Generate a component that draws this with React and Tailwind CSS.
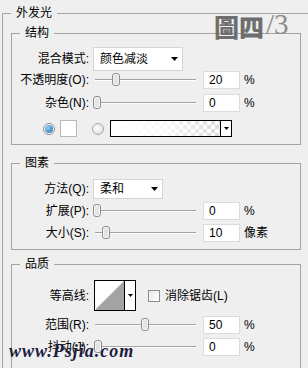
import React from "react";

const font = { fontFamily: '"Liberation Sans", "Noto Sans CJK SC", sans-serif' };

function Thumb() {
    return (
        <svg width="8" height="13" viewBox="0 0 8 13">
            <rect x="0.5" y="0.5" width="7" height="12" rx="2.5" fill="#f7f7f7" stroke="#8c8c8c" />
            <rect x="2" y="2" width="4" height="9" rx="1" fill="#e4e4e4" />
        </svg>
    );
}

function Slider({ pos }) {
    return (
        <div className="relative w-[101px] h-[14px] shrink-0 ml-[6px]">
            <div className="absolute left-0 right-0 top-[6px] h-px bg-[#a3a3a3]" />
            <div className="absolute left-0 right-0 top-[7px] h-px bg-white" />
            <div className="absolute top-0" style={{ left: pos }}>
                <Thumb />
            </div>
        </div>
    );
}

function Field({ value, unit = "%" }) {
    return (
        <>
            <div className="ml-[7px] w-[37px] h-[18px] bg-white border border-[#dcdcdc] pl-[5px] text-[12px] leading-[16px] text-black">
                {value}
            </div>
            <span className="ml-[4px] text-[12px] text-black">{unit}</span>
        </>
    );
}

function Label({ children }) {
    return <div className="w-[77px] shrink-0 text-right text-[12px] leading-[16px] text-black whitespace-nowrap">{children}</div>;
}

function Arrow() {
    return (
        <svg width="7" height="4" viewBox="0 0 7 4">
            <path d="M0 0h7L3.5 4z" fill="#000" />
        </svg>
    );
}

function Group({ title, className, children }) {
    return (
        <fieldset className={`border border-[#a4a4a4] ${className}`}>
            <legend className="ml-[8px] px-[5px] text-[12px] leading-[16px] text-black">{title}</legend>
            {children}
        </fieldset>
    );
}

export default function App() {
    return (
        <div className="relative w-[308px] h-[368px] overflow-hidden bg-[#efefef]" style={font}>
            <fieldset className="ml-[2px] mt-[5px] w-[306px] border border-r-0 border-b-0 border-[#a4a4a4] pb-[40px]">
                <legend className="ml-[8px] px-[5px] text-[12px] leading-[16px] text-black">外发光</legend>

                {/* 结构 */}
                <Group title="结构" className="ml-[8px] mt-[4px] w-[290px] pb-[7px]">
                    <div className="flex items-center mt-[6px] h-[24px]">
                        <Label>混合模式:</Label>
                        <div className="ml-[4px] w-[90px] h-[24px] bg-white border border-[#d4d4d4] flex items-center justify-between pl-[6px] pr-[4px] text-[12px]">
                            <span>颜色减淡</span>
                            <Arrow />
                        </div>
                    </div>
                    <div className="flex items-center h-[18px]">
                        <Label>不透明度(O):</Label>
                        <Slider pos={17} />
                        <Field value="20" />
                    </div>
                    <div className="flex items-center mt-[5px] h-[18px]">
                        <Label>杂色(N):</Label>
                        <Slider pos={-2} />
                        <Field value="0" />
                    </div>
                    <div className="flex items-center mt-[8px] h-[17px]">
                        <div className="ml-[31px] w-[12px] h-[12px] rounded-full border border-[#8a8a8a] bg-white flex items-center justify-center">
                            <div className="w-[8px] h-[8px] rounded-full bg-[radial-gradient(circle_at_35%_35%,#8fd0f5,#1d6aa8)]" />
                        </div>
                        <div className="ml-[5px] w-[17px] h-[17px] bg-white border border-[#b8b8b8]" />
                        <div className="ml-[15px] w-[12px] h-[12px] rounded-full border border-[#a8a8a8] bg-[radial-gradient(circle_at_40%_40%,#ffffff,#d8d8d8)]" />
                        <div className="ml-[6px] w-[122px] h-[17px] border border-black flex">
                            <div className="flex-1 bg-[repeating-conic-gradient(#d6d6d6_0%_25%,#ffffff_0%_50%)] bg-[length:8px_8px]">
                                <div className="w-full h-full bg-gradient-to-r from-white via-white/80 to-white/10" />
                            </div>
                            <div className="w-[11px] border-l border-black bg-white flex items-center justify-center">
                                <svg width="5" height="3" viewBox="0 0 5 3"><path d="M0 0h5L2.5 3z" fill="#000" /></svg>
                            </div>
                        </div>
                    </div>
                </Group>

                {/* 图素 */}
                <Group title="图素" className="ml-[8px] mt-[10px] w-[290px] pb-[7px]">
                    <div className="flex items-center mt-[8px] h-[20px]">
                        <Label>方法(Q):</Label>
                        <div className="ml-[4px] w-[70px] h-[20px] bg-white border border-[#d4d4d4] flex items-center justify-between pl-[6px] pr-[4px] text-[12px]">
                            <span>柔和</span>
                            <Arrow />
                        </div>
                    </div>
                    <div className="flex items-center mt-[3px] h-[18px]">
                        <Label>扩展(P):</Label>
                        <Slider pos={-2} />
                        <Field value="0" />
                    </div>
                    <div className="flex items-center mt-[4px] h-[18px]">
                        <Label>大小(S):</Label>
                        <Slider pos={7} />
                        <Field value="10" unit="像素" />
                    </div>
                </Group>

                {/* 品质 */}
                <Group title="品质" className="ml-[8px] mt-[6px] w-[290px] pb-[20px]">
                    <div className="flex items-center mt-[8px] h-[31px]">
                        <Label>等高线:</Label>
                        <div className="ml-[5px] w-[42px] h-[31px] border border-black bg-white flex">
                            <svg className="flex-1" height="29" viewBox="0 0 30 29" preserveAspectRatio="none">
                                <path d="M1 28L30 0V29H1z" fill="#a3a3a3" />
                            </svg>
                            <div className="w-[11px] border-l border-black flex items-center justify-center">
                                <svg width="5" height="3" viewBox="0 0 5 3"><path d="M0 0h5L2.5 3z" fill="#000" /></svg>
                            </div>
                        </div>
                        <div className="ml-[12px] w-[12px] h-[12px] border border-[#8e8e8e] bg-[linear-gradient(135deg,#e8e8e8,#ffffff)]" />
                        <span className="ml-[5px] text-[12px] text-black">消除锯齿(L)</span>
                    </div>
                    <div className="flex items-center mt-[5px] h-[18px]">
                        <Label>范围(R):</Label>
                        <Slider pos={46} />
                        <Field value="50" />
                    </div>
                    <div className="flex items-center mt-[4px] h-[18px]">
                        <Label>抖动(J):</Label>
                        <Slider pos={-1} />
                        <Field value="0" />
                    </div>
                </Group>
            </fieldset>

            {/* corner stamp */}
            <div className="absolute left-[214px] top-[10px] flex items-end leading-none">
                <span className="text-[25px] font-black text-[#6e6e6e]" style={{ fontFamily: '"Noto Sans CJK TC", sans-serif' }}>圖四</span>
                <span className="ml-[2px] text-[29px] font-light text-[#8c8c8c]" style={{ fontFamily: '"Liberation Serif", serif' }}>/3</span>
            </div>

            {/* watermark */}
            <div className="absolute left-[9px] top-[338px] text-[18px] italic font-bold text-[#1d1d3f] tracking-[1px]" style={{ fontFamily: '"Liberation Serif", serif' }}>
                www.Psjia.com
            </div>
        </div>
    );
}
